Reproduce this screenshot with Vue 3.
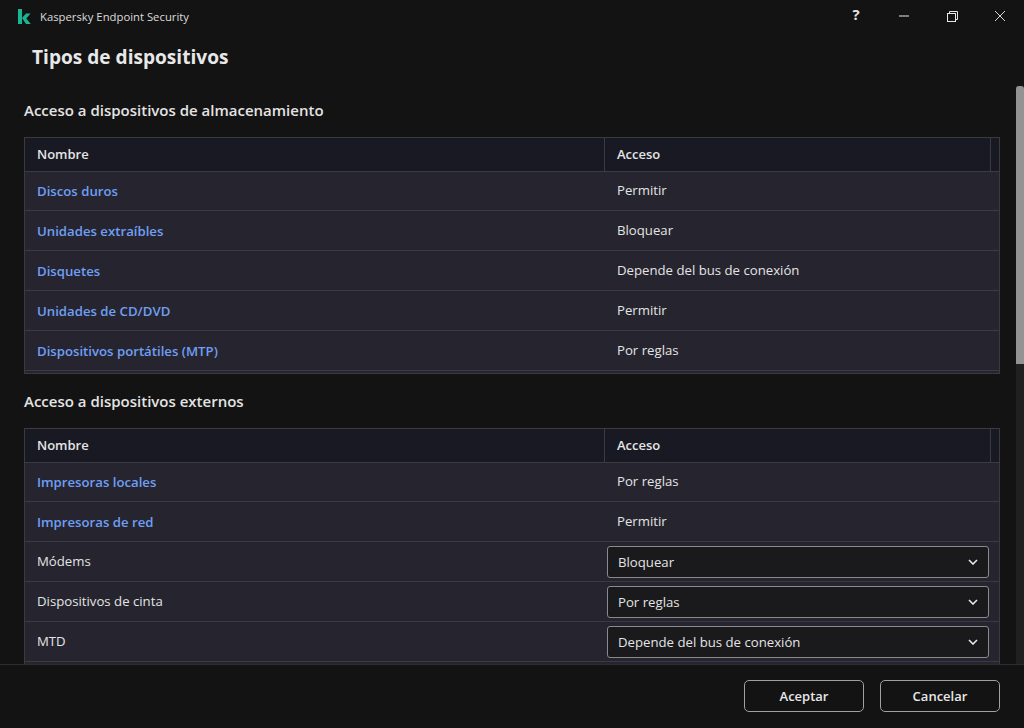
<script setup>
const storage = [
  { name: 'Discos duros', access: 'Permitir' },
  { name: 'Unidades extraíbles', access: 'Bloquear' },
  { name: 'Disquetes', access: 'Depende del bus de conexión' },
  { name: 'Unidades de CD/DVD', access: 'Permitir' },
  { name: 'Dispositivos portátiles (MTP)', access: 'Por reglas' },
]
const external = [
  { name: 'Impresoras locales', access: 'Por reglas', link: true },
  { name: 'Impresoras de red', access: 'Permitir', link: true },
  { name: 'Módems', access: 'Bloquear' },
  { name: 'Dispositivos de cinta', access: 'Por reglas' },
  { name: 'MTD', access: 'Depende del bus de conexión' },
]
</script>

<template>
  <div class="window">
    <header class="titlebar">
      <div class="brand">
        <svg class="logo" width="13" height="15" viewBox="0 0 13 15">
          <path d="M0 0h4v15H0z" fill="#17b891" />
          <path d="M4 9 8 4.5h4.6L8.2 9.4 12.8 15H8z" fill="#17b891" />
        </svg>
        <span>Kaspersky Endpoint Security</span>
      </div>
      <div class="win-actions">
        <span class="btn-win help">?</span>
        <span class="btn-win">
          <svg width="10" height="2" viewBox="0 0 10 2"><path d="M0 1h10" stroke="#e8e8e8" fill="none" /></svg>
        </span>
        <span class="btn-win">
          <svg class="restore" width="11" height="11" viewBox="0 0 11 11" fill="none" stroke="#e8e8e8">
            <rect x="0.5" y="2.5" width="8" height="8" />
            <path d="M2.5 2.5V.5h8v8h-2" />
          </svg>
        </span>
        <span class="btn-win">
          <svg width="10" height="10" viewBox="0 0 10 10"><path d="M0 0l10 10M10 0 0 10" stroke="#d8d8d8" fill="none" /></svg>
        </span>
      </div>
    </header>

    <h1 class="page-title">Tipos de dispositivos</h1>

    <main class="content">
      <div class="scroll-area">
        <h2 class="section-title">Acceso a dispositivos de almacenamiento</h2>
        <section class="grid">
          <div class="row head">
            <div class="cell name">Nombre</div>
            <div class="cell access">Acceso</div>
            <div class="cell spare"></div>
          </div>
          <div v-for="it in storage" :key="it.name" class="row">
            <div class="cell name"><a class="link">{{ it.name }}</a></div>
            <div class="cell access">{{ it.access }}</div>
          </div>
          <div class="grid-foot"></div>
        </section>

        <h2 class="section-title second">Acceso a dispositivos externos</h2>
        <section class="grid">
          <div class="row head">
            <div class="cell name">Nombre</div>
            <div class="cell access">Acceso</div>
            <div class="cell spare"></div>
          </div>
          <div v-for="it in external" :key="it.name" class="row">
            <div v-if="it.link" class="cell name"><a class="link">{{ it.name }}</a></div>
            <div v-else class="cell name plain">{{ it.name }}</div>
            <div v-if="it.link" class="cell access">{{ it.access }}</div>
            <div v-else class="cell select-cell">
              <div class="select">
                <span>{{ it.access }}</span>
                <svg width="10" height="6" viewBox="0 0 10 6"><path d="M1 1l4 4 4-4" stroke="#e8e8e8" stroke-width="1.6" fill="none" /></svg>
              </div>
            </div>
          </div>
          <div class="grid-foot"></div>
        </section>
      </div>
      <div class="scrollbar"><div class="thumb"></div></div>
    </main>

    <footer class="footer">
      <button class="btn">Aceptar</button>
      <button class="btn">Cancelar</button>
    </footer>
  </div>
</template>

<style scoped>
.window{ width:1024px; height:728px; display:flex; flex-direction:column; background:#131313; color:#e4e4e4; font-family:"Open Sans","Noto Sans",sans-serif; font-size:13.2px; overflow:hidden; }
.titlebar{ height:32px; flex:none; display:flex; justify-content:space-between; align-items:center; }
.brand{ display:flex; align-items:center; gap:9px; padding-left:18px; font-size:11.3px; color:#dcdcdc; }
.win-actions{ display:flex; }
.btn-win{ width:48px; height:32px; display:flex; align-items:center; justify-content:center; }
.help{ font-weight:700; font-size:15px; padding-bottom:4px; box-sizing:border-box; }
.page-title{ margin:0; padding:9px 32px 0; height:44px; flex:none; font-size:19.1px; line-height:32px; font-weight:700; color:#e8e8e8; box-sizing:border-box; }
.content{ flex:1; min-height:0; display:flex; overflow:hidden; }
.scroll-area{ flex:1; padding:0 0 0 24px; overflow:hidden; }
.section-title{ margin:0; padding-top:23px; height:61px; box-sizing:border-box; font-size:15px; line-height:22px; font-weight:600; color:#e4e4e4; }
.section-title.second{ padding-top:16px; height:54px; }
.grid{ width:976px; background:#26252f; border:1px solid #3a3a3f; border-bottom:none; box-sizing:border-box; }
.row{ display:flex; height:40px; border-bottom:1px solid #3a3a42; box-sizing:border-box; }
.row.head{ height:34px; background:#191923; font-weight:600; font-size:13px; }
.row.head + .row{ height:39px; }
.cell{ display:flex; align-items:center; box-sizing:border-box; }
.head .cell{ padding-bottom:2px; }
.name{ width:579px; padding-left:12px; }
.name.plain{ padding-bottom:2px; }
.access{ flex:1; padding-left:13px; padding-bottom:2px; }
.head .access{ border-left:1px solid #3a3a42; padding-left:12px; }
.head .spare{ width:9px; border-left:1px solid #3a3a42; padding:0; }
.link{ color:#6f9ff5; font-weight:600; font-size:13.2px; }
.select-cell{ flex:1; padding:4px 10px 4px 3px; }
.select{ flex:1; height:32px; box-sizing:border-box; display:flex; align-items:center; justify-content:space-between; padding:0 10px; background:#1a1a1c; border:1px solid #8a8a8a; border-radius:3px; }
.grid-foot{ height:2px; border-bottom:1px solid #3a3a3f; }
.scrollbar{ width:8px; margin:10px 0 0 8px; flex:none; background:#202020; }
.thumb{ width:8px; height:278px; background:#939393; border-radius:3px 3px 0 0; }
.footer{ height:64px; flex:none; box-sizing:border-box; display:flex; justify-content:flex-end; align-items:flex-start; gap:16px; padding:15px 24px 0 0; border-top:1px solid #2c2c2c; background:#131313; }
.btn{ width:120px; height:32px; background:transparent; border:1px solid #a0a0a0; border-radius:5px; color:#e8e8e8; font:600 13px "Open Sans","Noto Sans",sans-serif; }
</style>
